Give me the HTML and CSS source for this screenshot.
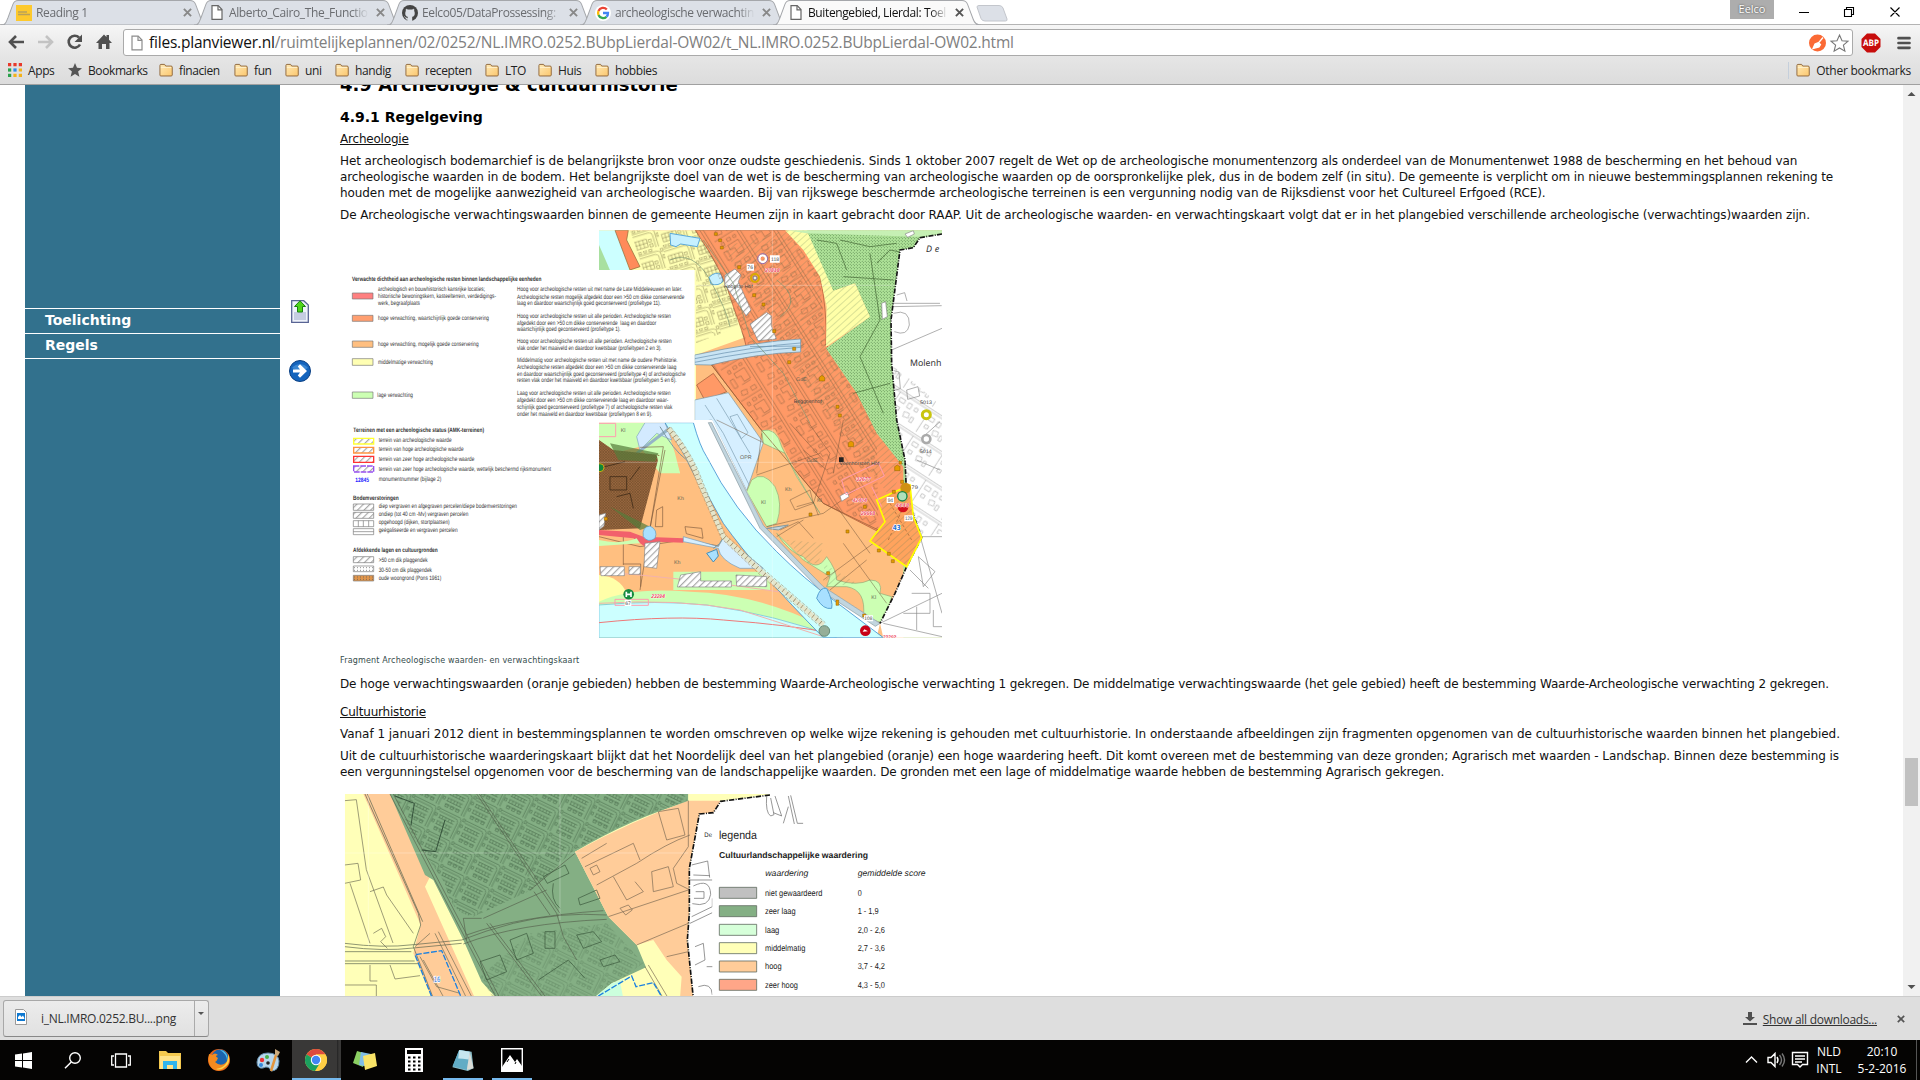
FILE: index.html
```html
<!DOCTYPE html>
<html lang="nl">
<head>
<meta charset="utf-8">
<title>Buitengebied, Lierdal: Toelichting</title>
<link rel="stylesheet" href="styles.css">
</head>
<body>
<svg class="defs" width="0" height="0" aria-hidden="true">
  <defs>
    <linearGradient id="folderFill" x1="0" y1="0" x2="1" y2="1"><stop offset="0" stop-color="#ffe9b5"/><stop offset="1" stop-color="#fbc76e"/></linearGradient>
    <symbol id="folder" viewBox="0 0 15 14"><path d="M1 12.500V2.200Q1 1 2 1h4l1.200 1.800H13q1.200 0 1.200 1.200v8.500Q14 13.400 13 13.400H2q-1 0-1-.9z" fill="url(#folderFill)" stroke="#8c6338"/><path d="M2 4.200h11" stroke="#fff3d2"/></symbol>
    <symbol id="page" viewBox="0 0 12 15"><path d="M1 .7h6.200L11 4.600v9.700H1z" fill="#fff" stroke="#666" stroke-width="1.200"/><path d="M7 .8v4h4" fill="none" stroke="#666" stroke-width="1.200"/></symbol>
    <symbol id="close" viewBox="0 0 8 8"><path d="M.8.8l6.400 6.400M7.200.8L.8 7.200" stroke="currentColor" stroke-width="1.700"/></symbol>
    <symbol id="tab" viewBox="0 0 208 24" preserveAspectRatio="none"><path d="M0 24C5 24 5 21 7 17L12 4Q13.500.5 17 .5H189Q193 .5 194.500 4L200 18Q202 24 208 24z" fill="currentColor" stroke="#a5a7ab"/></symbol>
    <pattern id="hatch" width="14" height="14" patternUnits="userSpaceOnUse" patternTransform="rotate(45)"><path d="M2 0v14" stroke="#555" stroke-width="1.800"/></pattern>
    <pattern id="thinhatch" width="15" height="15" patternUnits="userSpaceOnUse" patternTransform="rotate(48)"><path d="M2 0v15" stroke="#5c7a52" stroke-width="1.300" opacity=".65"/></pattern>
    <pattern id="dots" width="9" height="9" patternUnits="userSpaceOnUse"><circle cx="2" cy="2" r="1.450" fill="#3c6634"/><circle cx="6.500" cy="6.500" r="1.450" fill="#3c6634"/></pattern>
    <pattern id="mesh" width="8" height="8" patternUnits="userSpaceOnUse"><path d="M0 0l8 8M8 0L0 8" stroke="#3a2613" stroke-width="1.100" opacity=".75"/></pattern>
    <pattern id="houses" width="92" height="68" patternUnits="userSpaceOnUse" patternTransform="rotate(-17)"><g fill="none" stroke="#665c35" stroke-width="1.200"><path d="M0 12h70q12 0 12 12v44M0 20h62q12 0 12 12v36M8 36h44v24H8zM8 48h44M18 36v24M29 36v24M41 36v24"/><path d="M4 0h8v7H4zM18 1h8v7h-8zM34 0h8v7h-8zM50 1h9v7h-9zM84 8h7v9h-7zM86 28h6v10h-6zM57 40h9v8h-9zM58 54h9v9h-9z"/></g></pattern>
    <pattern id="houses2" width="112" height="94" patternUnits="userSpaceOnUse" patternTransform="rotate(58)"><g fill="none" stroke="#5d4a32" stroke-width="1.200" opacity=".85"><path d="M0 10h112M0 19h112M30 19v75M60 30h36v22H76v14H60zM8 30h12v16H8zM7 58l14 4-4 18-13-4zM42 30h8v9h-8zM41 48h9v12h-9zM44 72h10v8H44zM72 76h28v12H72zM101 33v30"/></g></pattern>
    <pattern id="houses3" width="84" height="76" patternUnits="userSpaceOnUse" patternTransform="rotate(26)"><g fill="none" stroke="#3b5c3d" stroke-width="1.400"><path d="M0 7h60q12 0 12 13v56M0 15h54q10 0 10 10v51M5 25h50M5 34h50M5 44h50M5 54h50M5 64h50M8 25v9M17 25v9M27 25v9M37 25v9M47 25v9M8 44v10M18 44v10M28 44v10M38 44v10M48 44v10M8 64h9v8H8zM25 64h9v8h-9zM43 64h9v8h-9zM75 5h7v8h-7zM75 24h7v8h-7zM76 45h7v8h-7z"/></g></pattern>
    <pattern id="white" width="104" height="90" patternUnits="userSpaceOnUse" patternTransform="rotate(33)"><g fill="none" stroke="#999" stroke-width="1.500"><path d="M0 8h104M0 15h104M22 15v75M32 28h18v12H32zM62 28h12v16H62zM86 30h10v11H86zM34 56h12v10H34zM64 58l16-3 4 14-17 4zM90 60h9v16h-9z"/></g></pattern>
    <clipPath id="mapClip"><path d="M27 31H1056V1253H27z"/></clipPath>
    <clipPath id="cultClip"><path d="M44 42H1420V132H1147V655H44z"/></clipPath>
  </defs>
</svg>

<header class="chrome">
  <div class="titlebar">
    <div class="tabs">
      <div class="tab"><svg class="tab-shape"><use href="#tab"/></svg><svg class="fav" viewBox="0 0 16 16"><path fill="#fdc92d" d="M0 0h16v16H0z"/><path d="M2 7h9M2 9.500h12" stroke="#b8a15b" stroke-width="1.500"/></svg><span class="tab-title">Reading 1</span><svg class="x"><use href="#close"/></svg></div>
      <div class="tab"><svg class="tab-shape"><use href="#tab"/></svg><svg class="fav doc"><use href="#page"/></svg><span class="tab-title">Alberto_Cairo_The_Functio</span><svg class="x"><use href="#close"/></svg></div>
      <div class="tab"><svg class="tab-shape"><use href="#tab"/></svg><svg class="fav" viewBox="0 0 16 16"><circle cx="8" cy="8" r="8" fill="#444"/><path d="M5.700 16v-3C3 13.400 3 11.500 2 11.300M6 16v-4.300C3.500 11.400 3.300 9 3.500 7.500L4 6V4l2 .8h4L12 4v2l.5 1.500c.2 1.500 0 3.900-2.500 4.200V16z" fill="#dce0e7" stroke="#dce0e7" stroke-width=".4"/></svg><span class="tab-title">Eelco05/DataProssessing:</span><svg class="x"><use href="#close"/></svg></div>
      <div class="tab"><svg class="tab-shape"><use href="#tab"/></svg><svg class="fav" viewBox="0 0 16 16"><circle cx="8" cy="8" r="8" fill="#fff"/><g fill="none" stroke-width="2.300"><path d="M11.800 4.500A5 5 0 0 0 3.500 6" stroke="#ea4335"/><path d="M3.500 6a5 5 0 0 0 0 4" stroke="#fbbc05"/><path d="M3.500 10a5 5 0 0 0 8 1.800" stroke="#34a853"/><path d="M11.500 11.800A5 5 0 0 0 13 8H8" stroke="#4285f4"/></g></svg><span class="tab-title">archeologische verwachtin</span><svg class="x"><use href="#close"/></svg></div>
      <div class="tab active"><svg class="tab-shape"><use href="#tab"/></svg><svg class="fav doc"><use href="#page"/></svg><span class="tab-title">Buitengebied, Lierdal: Toel</span><svg class="x"><use href="#close"/></svg></div>
      <svg class="newtab" viewBox="0 0 32 17"><path d="M1 2Q1 .5 3 .5H23q3 0 4 2.500l4 11q.5 2-1.500 2H9q-3 0-4-2.500z" fill="#dce0e7" stroke="#c3c6cc"/></svg>
    </div>
    <div class="user">Eelco</div>
    <svg class="winbuttons" viewBox="0 0 120 24"><path d="M9 12.500h10M54.500 9.500h7v7h-7zM56.500 9.500v-2h7v7h-2M100.500 7.500l9 9M109.500 7.500l-9 9" fill="none" stroke="#000" stroke-width="1.100"/></svg>
  </div>
  <div class="toolbar">
    <svg class="nav" viewBox="0 0 120 30"><g fill="none" stroke="#505050" stroke-width="2.600"><path d="M25 15H11M17 9l-6 6 6 6"/><path d="M39 15h14M47 9l6 6-6 6" stroke="#c3c3c3"/><path d="M80 10.500a6 6 0 1 0 1 7"/></g><path d="M83 7.500v7.500h-7.500zM97 16l8-8.500 2.500 2.500V8h2.500v4.800l3 3.200h-2.500v6h-3.500v-5h-4v5h-3.500v-6z" fill="#505050"/></svg>
    <div class="omnibox">
      <svg class="urlpage"><use href="#page"/></svg>
      <span class="url"><b>files.planviewer.nl</b>/ruimtelijkeplannen/02/0252/NL.IMRO.0252.BUbpLierdal-OW02/t_NL.IMRO.0252.BUbpLierdal-OW02.html</span>
      <svg class="omni-icons" viewBox="0 0 42 20"><circle cx="9.500" cy="10" r="8.500" fill="#fb6a35"/><path d="M15 4.500l-5 6M10.500 9.500L7 11l-2 4.500 6-1.500 1.500-2.500z" stroke="#fff" fill="#fff" stroke-width="1.300"/><path d="M31.500 2l2.500 5.700 6 .5-4.600 4 1.500 6-5.400-3.200-5.400 3.200 1.500-6-4.600-4 6-.5z" fill="#fff" stroke="#777" stroke-width="1.100"/></svg>
    </div>
    <svg class="abp" viewBox="0 0 20 20"><path d="M6 .5h8L19.500 6v8L14 19.500H6L.5 14V6z" fill="#c70d0c"/><text x="2" y="13.300" textLength="16" lengthAdjust="spacingAndGlyphs" font-size="9" font-weight="bold" fill="#fff">ABP</text></svg>
    <svg class="menu" viewBox="0 0 14 14"><path d="M1.500 2.200h11M1.500 7h11M1.500 11.800h11" stroke="#505050" stroke-width="2.700" stroke-linecap="round"/></svg>
  </div>
  <nav class="bookmarks">
    <div class="bm w60"><svg viewBox="0 0 13 13"><path d="M0 0h3v3H0zM5 0h3v3H5zM10 0h3v3h-3z" fill="#e8392b"/><path d="M0 5h3v3H0z" fill="#2ba14b"/><path d="M5 5h3v3H5z" fill="#2d8bea"/><path d="M10 5h3v3h-3zM5 10h3v3H5zM10 10h3v3h-3z" fill="#f3b21b"/><path d="M0 10h3v3H0z" fill="#2ba14b"/></svg>Apps</div>
    <div class="bm w91"><svg viewBox="0 0 14 14"><path d="M7 0l2 4.800 5 .4-3.900 3.400 1.300 5.100L7 10.900l-4.400 2.800 1.300-5.100L0 5.200l5-.4z" fill="#555"/></svg>Bookmarks</div>
    <div class="bm w75"><svg><use href="#folder"/></svg>finacien</div>
    <div class="bm w51"><svg><use href="#folder"/></svg>fun</div>
    <div class="bm w50"><svg><use href="#folder"/></svg>uni</div>
    <div class="bm w70"><svg><use href="#folder"/></svg>handig</div>
    <div class="bm w80"><svg><use href="#folder"/></svg>recepten</div>
    <div class="bm w53"><svg><use href="#folder"/></svg>LTO</div>
    <div class="bm w57"><svg><use href="#folder"/></svg>Huis</div>
    <div class="bm"><svg><use href="#folder"/></svg>hobbies</div>
    <div class="bm other"><svg><use href="#folder"/></svg>Other bookmarks</div>
  </nav>
</header>

<main class="viewport">
  <aside class="side"><ul class="side-menu"><li>Toelichting</li><li>Regels</li></ul></aside>
  <div class="tools">
    <svg class="up" viewBox="0 0 18 23"><path d="M.7.7h12L17.300 5v17.300H.7z" fill="#eef2fa" stroke="#586494" stroke-width="1.300"/><path d="M3 12h12v8H3z" fill="#c5cde2"/><path d="M9 .8l5.500 5.700h-3V12h-5V6.500h-3z" fill="#4fd41b" stroke="#16820f"/></svg>
    <svg class="next" viewBox="0 0 22 22"><circle cx="11" cy="11" r="10.500" fill="#1464bd" stroke="#0a3f83"/><path d="M3 8a9 7 0 0 1 16 0q-8 5-16 0z" fill="#4a94dc" opacity=".7"/><path d="M4 9.500h7L8.800 6.500 11 4.300 18 11l-7 6.700-2.200-2.200 2.200-3H4z" fill="#fff"/></svg>
  </div>
  <article class="doc-body">
    <h2><span>4.9 Archeologie &amp; cultuurhistorie</span></h2>
    <h3>4.9.1 Regelgeving</h3>
    <p class="sub">Archeologie</p>
    <p><span class="ln a1">Het archeologisch bodemarchief is de belangrijkste bron voor onze oudste geschiedenis. Sinds 1 oktober 2007 regelt de Wet op de archeologische monumentenzorg als onderdeel van de Monumentenwet 1988 de bescherming en het behoud van</span>
    <span class="ln a2">archeologische waarden in de bodem. Het belangrijkste doel van de wet is de bescherming van archeologische waarden op de oorspronkelijke plek, dus in de bodem zelf (in situ). De gemeente is verplicht om in nieuwe bestemmingsplannen rekening te</span>
    <span class="ln a3">houden met de mogelijke aanwezigheid van archeologische waarden. Bij van rijkswege beschermde archeologische terreinen is een vergunning nodig van de Rijksdienst voor het Cultureel Erfgoed (RCE).</span></p>
    <p><span class="ln a4">De Archeologische verwachtingswaarden binnen de gemeente Heumen zijn in kaart gebracht door RAAP. Uit de archeologische waarden- en verwachtingskaart volgt dat er in het plangebied verschillende archeologische (verwachtings)waarden zijn.</span></p>

    <svg class="fig1" viewBox="340 228 603 410">
      <g transform="translate(590 220) scale(.33333)" clip-path="url(#mapClip)">
        <path d="M27 31H1056V1253H27z" fill="#ffbf80"/>
        <!-- northern residential area -->
        <path d="M100 31H340L430 220 470 350 318 405V600H27V31z" fill="#ffffb3"/><path d="M120 31H340L430 220 445 320 318 370V150H160z" fill="url(#houses)"/>
        <path d="M240 40l90 15-8 25-50-8-14 8-16-5zM357 172q20-20 38-8l4 20q-12 15-36 8z" fill="#c6f0ff" stroke="#5aa8d8" stroke-width="3"/>
        <path d="M27 31H80L120 155H27z" fill="#ccffff"/><path d="M27 75L62 155H27z" fill="#a8e0a0"/><path d="M75 31H115L110 60 150 140 120 150z" fill="#ff8b5a" stroke="#863" stroke-width="2"/>
        <!-- village ridge -->
        <path d="M316 31H590Q650 80 690 170 712 270 708 375 760 420 800 520L860 630 945 735 950 800 865 935 700 850 510 625 365 435 470 385Q460 340 430 260 405 160 316 31z" fill="#ff9966" stroke="#a65534" stroke-width="2"/>
        <path d="M316 31H590L690 170 708 375 860 630 865 930 700 850 365 435 470 385 430 260z" fill="url(#houses2)"/>
        <path d="M590 31L690 170 708 375 860 630 945 735 900 830 560 380 400 80z" fill="url(#thinhatch)"/>
        <path d="M585 31H655L730 212 795 190 840 290 708 380 710 260 690 170 640 90z" fill="#ffffa8"/><path d="M585 31H655L730 212 795 190 840 290 708 380 710 260 690 170 640 90z" fill="url(#thinhatch)"/>
        <path d="M650 31H1056V1253H940V740L860 640 800 520 708 385 840 290 795 190 730 212z" fill="#aee298"/><path d="M650 31H1056V640H940V740L860 640 800 520 708 385 840 290 795 190 730 212z" fill="url(#dots)"/><path d="M840 100l30 200-60 110 70 170M750 60l90 20 80-10M760 170l150 10M790 520l110-30M680 60l60 10 30 80M860 130l40-40 50 10" stroke="#406030" stroke-width="2" fill="none"/>
        <path d="M590 31H1056V42L980 50 650 40z" fill="#c6f0b4"/>
        <!-- motorway and water -->
        <path d="M314 405Q500 365 632 357V396Q500 400 363 435L314 434z" fill="#c9e4f4" stroke="#668fa8" stroke-width="2"/><path d="M314 416Q500 378 632 369M314 427Q500 390 632 382M480 380L632 378" stroke="#648caa" fill="none" stroke-width="2"/>
        <path d="M320 495L370 460 410 515 345 542z" fill="#ff9966" stroke="#953" stroke-width="2"/>
        <path d="M314 540L415 518 520 668 470 812 365 600 314 608z" fill="#d6efff" stroke="#7b99a5" stroke-width="2"/><path d="M345 555L400 640 480 800M380 535L480 700M420 590l22-7 32 55-20 18z" fill="none" stroke="#7b9db0" stroke-width="2"/>
        <!-- lower polders -->
        <path d="M27 608H225L255 700 270 760 210 760 150 680 27 710z" fill="#ccffb3"/><path d="M165 608H225L245 660 200 640 150 690 140 650z" fill="#d3eaff" stroke="#7fa5bf" stroke-width="2"/><path d="M240 624L140 700" stroke="#94b4c8" stroke-width="9"/>
        <path d="M515 630L555 628 600 720 690 880 720 970 690 1010 610 970 550 930 590 870 550 760z" fill="#ffbf80"/>
        <path d="M515 632Q560 620 575 680L620 770 690 880Q650 820 585 700L520 670zM485 780Q520 750 555 800 580 850 560 910L530 920 470 815z" fill="#ccffb3" stroke="#91aa77" stroke-width="2"/>
        <path d="M560 940Q600 1000 640 1010 680 1060 710 1010 740 1050 740 1080 800 1100 840 1080 880 1080 870 1120L905 1130 880 1210 820 1190Q830 1110 770 1100L710 1100 720 1070 640 1020z" fill="#ccffb3" stroke="#91aa77" stroke-width="2"/>
        <path d="M590 960l110 10-15 60-35 0zM700 1030l100 60-90 10z" fill="url(#thinhatch)"/>
        <!-- dark excavated estate -->
        <path d="M27 660L70 690 208 705 150 925 27 930z" fill="#9c6a40"/><path d="M27 660L70 690 208 705 150 925 27 930z" fill="url(#mesh)"/><path d="M60 670L205 700 195 725 85 720zM60 860L180 920 150 930z" fill="#567c3a" opacity=".7"/><path d="M200 705L260 730 270 760 210 750z" fill="#ccffb3"/>
        <path d="M60 770h50v40H60zM80 830l40-10 10 45M45 740l60-15M120 780l30-40" fill="none" stroke="#2f2010" stroke-width="2"/>
        <!-- roads and parcels -->
        <path d="M220 680L150 1110M150 682L220 680M225 690L180 925M200 870l18-10 0 60-22 0zM285 920l50 5 4 30-50-14zM100 1032h52V1100M100 950v85M27 950L150 980 280 960 400 980" fill="none" stroke="#735238" stroke-width="1.800"/>
        <path d="M380 600L520 668M515 640L500 760M500 765L690 700M530 920L700 880 770 830M560 950L640 900M760 970L890 1150M740 860L840 1000M600 840l60-30 10 40-55 20zM620 860l50-14 15 40M570 930l55-25 45 50M720 1110l110-90M850 970L700 1080M600 610L700 720M650 600L720 700 670 850M760 600l-30 160M640 690l70 60" stroke="#6e5239" stroke-width="1.800" fill="none" opacity=".8"/>
        <path d="M365 435L510 625 700 850 865 930" stroke="#8a5a35" stroke-width="2" fill="none"/>
        <path d="M27 930L120 935 160 950 280 955V968L200 965 165 980 130 955 27 945z" fill="#f2606c"/><path d="M160 950Q155 920 180 918 205 930 195 955 175 970 160 950z" fill="#a8e0ff" stroke="#5a9bc4" stroke-width="2"/>
        <path d="M27 1065Q90 1070 110 1120L27 1150z" fill="#ffffa8"/><path d="M27 960Q90 975 140 955L150 970 27 978zM250 1055H540V1110H250z" fill="#ccffb3"/>
        <path d="M27 1145Q120 1100 300 1115 500 1120 700 1220V1253H27z" fill="#ccffb3"/>
        <!-- river Maas and canal -->
        <path d="M27 1155Q200 1140 350 1155 560 1185 740 1253H27z" fill="#ccffff" stroke="#69b5d6" stroke-width="2"/><path d="M27 1208Q250 1185 400 1200 600 1215 730 1240" fill="none" stroke="#e77" stroke-width="3"/><path d="M27 1150Q260 1135 450 1170L700 1250M27 1055Q300 1075 600 1120L860 1210" fill="none" stroke="#f2b2ad" stroke-width="3"/>
        <path d="M314 600H367L520 916 600 1010 700 1100 870 1210 860 1253 760 1253 400 900 260 608z" fill="#fff"/>
        <path d="M225 608H310Q330 680 350 710 430 870 560 995 640 1075 730 1140L880 1253H700Q500 1050 400 910 320 760 225 608z" fill="#ccffff" stroke="#3d91d3" stroke-width="2.500"/>
        <path d="M365 608L520 916 700 1100 870 1210 856 1219 690 1110 510 925 355 608z" fill="#c1d5df" stroke="#87989e" stroke-width="2"/><path d="M530 925L595 915 565 930z" fill="#c1d5df" stroke="#87989e" stroke-width="3"/>
        <path d="M280 950L385 980 402 950 520 1045 450 1045Q390 1020 385 985L280 965z" fill="#d6efff" stroke="#6f9cbc" stroke-width="2"/><path d="M350 1000l30-12 5 20-15 18z" fill="#a8e0ff" stroke="#478db5" stroke-width="3"/><path d="M210 620Q250 690 290 720L390 920Q415 960 370 985" fill="none" stroke="#7c99a0" stroke-width="3"/>
        <path d="M235 625Q300 700 330 790L400 950 520 1060 700 1215" stroke="#e4e6cc" stroke-width="14" fill="none"/><path d="M235 625Q300 700 330 790L400 950 520 1060 700 1215" stroke="#8c7858" stroke-width="13" fill="none" stroke-dasharray="1.800 13"/><path d="M228 629Q290 700 322 790L394 955 514 1068 694 1222M242 621Q308 700 338 786L406 944 526 1052 706 1208" stroke="#a98f68" stroke-width="1.800" fill="none" stroke-dasharray="10 4"/>
        <path d="M680 1135Q690 1100 710 1105 730 1145 725 1165 700 1170 680 1135z" fill="#a8e0ff" stroke="#55a1d0" stroke-width="3"/>
        <path d="M27 150H314V608H27z" fill="#fff"/>
        <!-- area beyond the municipal border -->
        <path d="M1056 42L990 53 970 83 930 90 903 300 905 430 920 600 945 720 950 830 995 953 950 1040 915 1120 870 1210 880 1253H1056z" fill="#fff"/><path d="M905 430L920 600 945 720 950 830 995 953 1056 940V560z" fill="url(#white)"/>
        <g fill="none" stroke="#888" stroke-width="2"><path d="M905 250h145M905 260l150-3M920 225l24-7 7 25M910 280q50-15 48 35-6 35-45 20M905 390L1056 325M950 510l34-10 5 28-36 10zM912 452l15 4 4 50-17 5M870 1210L1056 1120M990 948L1056 1180M940 1180h80v-60h-55M960 1050l55 55M985 1010l50 45-35 45zM995 950H1056M880 1210L1056 1250M980 1160V1230M1030 1170v50h26M1000 650l50-45M980 720l70 30"/></g>
        <path d="M1056 42L990 53 970 83 930 90 903 300 905 430 920 600 945 720 950 830 995 953 950 1040 915 1120 870 1210" fill="none" stroke="#151515" stroke-width="5" stroke-dasharray="15 4 3 4"/>
        <!-- monument zone and hatched parcels -->
        <path d="M860 840L960 795 970 890 995 953 950 1040 840 963 885 905z" fill="#ffa35d"/><path d="M860 840L960 795 970 890 995 953 950 1040 840 963 885 905z" fill="url(#thinhatch)" stroke="#ff0" stroke-width="5"/><path d="M900 850l65 110M895 960l50-110" stroke="#9c6238" stroke-width="2" stroke-dasharray="8 7"/>
        <g fill="#fff" stroke="#888" stroke-width="2"><path d="M405 165l30-18 18 18-8 20 38 85-14 18-65-95zM480 312l50-35 14 10 0 30 15 40-55 5z"/><path d="M165 970l45-5-10 80-38-5zM30 1040h73v27H33zM117 1040h34v23h-34zM272 1065l60-10v28h92v18H262zM438 1065l92 5v30l-90-2zM27 885l20-5-5 38-15 12zM750 828l22-12 5 14-22 14zM875 250l12-5 5 45-15 8zM945 42l25-10 3 10-20 10z"/></g>
        <g fill="url(#hatch)"><path d="M405 165l30-18 18 18-8 20 38 85-14 18-65-95zM480 312l50-35 14 10 0 30 15 40-55 5z"/><path d="M165 970l45-5-10 80-38-5zM30 1040h73v27H33zM117 1040h34v23h-34zM272 1065l60-10v28h92v18H262zM438 1065l92 5v30l-90-2zM27 885l20-5-5 38-15 12z"/></g>
        <path d="M547 31V1253M27 196H1056M27 727H1056" stroke="#fff" stroke-width="1.500" opacity=".55"/>
        <path d="M340 60l90 130 50 160 100 110 80 150M240 120q70-30 120 60t60 140M560 180q80 60 10 110" stroke="#75936f" stroke-width="2" fill="none"/>
        <path d="M755 780l110-52 18 40-115 56zM75 1138h100v18H75zM845 800l30 60M27 610h50v40H27" stroke="#ff9db0" stroke-width="3" fill="none"/>
        <g fill="#e59a00" stroke="#8b6200" stroke-width="1.500"><path d="M373 38h9v8h-9zM386 57h9v8h-9zM391 79h9v8h-9zM443 137h9v9h-9zM488 221h9v9h-9zM516 249h9v9h-9zM548 329h9v9h-9zM608 382h9v9h-9zM593 422h9v9h-9zM688 472l8-6 8 6v11h-16zM738 556h9v9h-9zM745 582h9v9h-9zM775 668l8-5 8 5v12h-16zM914 740l8-5 8 5v12h-16zM657 879h9v9h-9zM768 930h9v9h-9zM820 856h9v9h-9zM862 987h9v9h-9zM892 997h9v9h-9zM904 1019h9v9h-9zM710 1055h9v9h-9zM738 1140h8v16h-8zM818 1182h9v9h-9zM907 811h9v9h-9zM932 781h9v9h-9zM927 724h8v8h-8zM43 892h9v9h-9z"/></g>
        <g fill="none"><circle cx="518" cy="116" r="10" stroke="#fff" stroke-width="7"/><circle cx="518" cy="116" r="15" stroke="#8e6eb6" stroke-width="3"/><circle cx="495" cy="174" r="12" stroke="#d9a900" stroke-width="6"/><circle cx="495" cy="174" r="6" fill="#eee" stroke="#777" stroke-width="3"/><circle cx="1009" cy="584" r="12" stroke="#c9c50d" stroke-width="9" fill="#fff"/><circle cx="1009" cy="657" r="12" stroke="#aaa" stroke-width="8" fill="#fff"/></g>
        <circle cx="947" cy="804" r="16" fill="#d09014"/><path d="M923 860a16 17 0 0 0 32 0z" fill="#d4111d"/><circle cx="937" cy="829" r="14" fill="#aee0bd" stroke="#138547" stroke-width="4"/><circle cx="116" cy="1123" r="16" fill="#16893f"/><path d="M109 1115v16M123 1115v16M109 1123h14" stroke="#fff" stroke-width="5"/><circle cx="703" cy="1233" r="16" fill="#95ae98" stroke="#668b75" stroke-width="3"/><circle cx="826" cy="1232" r="16" fill="#c80017"/><path d="M818 1235l5-7 11 6z" fill="#fff"/><circle cx="30" cy="743" r="12" fill="#108639" stroke="#cda914" stroke-width="3"/><path d="M747 712h14v14h-14z" fill="#222"/>
        <g class="map-tags"><path d="M540 106h29v22h-29zM470 131h22v21h-22zM890 831h22v18h-22zM943 886h26v18h-26zM104 1139h20v19h-20zM822 1186h27v18h-27z" fill="#fff"/><text x="543" y="123" textLength="24" lengthAdjust="spacingAndGlyphs">118</text><text x="472" y="147" textLength="17">76</text><text x="893" y="846" textLength="16">94</text><text x="945" y="901" textLength="22" lengthAdjust="spacingAndGlyphs">129</text><text x="106" y="1155" textLength="16">67</text><text x="823" y="1200" textLength="24" lengthAdjust="spacingAndGlyphs">108</text><text x="964" y="806" textLength="20" lengthAdjust="spacingAndGlyphs">79</text><text x="990" y="552" textLength="36" lengthAdjust="spacingAndGlyphs">5013</text><text x="989" y="699" textLength="36" lengthAdjust="spacingAndGlyphs">5014</text><text x="402" y="205" textLength="86" lengthAdjust="spacingAndGlyphs">Hoogste Hof</text><text x="611" y="548" textLength="84" lengthAdjust="spacingAndGlyphs">Beggnenhof</text><text x="748" y="735" textLength="120" lengthAdjust="spacingAndGlyphs">Veenhorsten Hof</text></g>
        <g class="map-code"><text x="92" y="636">Kl</text><text x="262" y="839">Kh</text><text x="252" y="1032">Kh</text><text x="450" y="716">OPR</text><text x="585" y="813">Kh</text><text x="513" y="853">Kl</text><text x="650" y="727">GdE</text><text x="681" y="847">Kl</text><text x="844" y="1138">Kl</text><text x="618" y="482">GdE</text></g>
        <g class="map-red"><text x="526" y="157" textLength="43">20818</text><text x="799" y="784" textLength="43">32677</text><text x="788" y="845" textLength="43">42404</text><text x="813" y="884" textLength="43">29968</text><text x="917" y="862" textLength="40">4448</text><text x="184" y="1133" textLength="41">23294</text><text x="878" y="1258" textLength="41">23292</text></g>
        <text x="908" y="929" font-size="21" font-weight="bold" fill="#1b72d7" stroke="#fff" stroke-width="4" paint-order="stroke" textLength="24" lengthAdjust="spacingAndGlyphs">43</text>
        <text class="place" x="1008" y="96" font-style="italic" textLength="40">D e</text><text class="place" x="960" y="439" textLength="94" lengthAdjust="spacingAndGlyphs">Molenh</text>
      </g>
      <g class="legend" transform="translate(330 220) scale(.33333)">
        <g font-weight="bold"><text x="66" y="183" textLength="568" lengthAdjust="spacingAndGlyphs">Verwachte dichtheid aan archeologische resten binnen landschappelijke eenheden</text><text x="70" y="635" textLength="392" lengthAdjust="spacingAndGlyphs">Terreinen met een archeologische status (AMK-terreinen)</text><text x="69" y="839" textLength="137" lengthAdjust="spacingAndGlyphs">Bodemverstoringen</text><text x="69" y="996" textLength="254" lengthAdjust="spacingAndGlyphs">Afdekkende lagen en cultuurgronden</text></g>
        <g stroke="#777" stroke-width="2"><path fill="#ff8080" d="M67 219h62v18H67z"/><path fill="#ff9f70" d="M67 286h62v18H67z"/><path fill="#ffbf80" d="M67 363h62v19H67z"/><path fill="#ffffb3" d="M67 416h62v20H67z"/><path fill="#ccffb3" d="M67 516h62v19H67z"/></g>
        <text x="144" y="212" textLength="321" lengthAdjust="spacingAndGlyphs">archeologisch en bouwhistorisch kansrijke locaties;</text><text x="144" y="234" textLength="354" lengthAdjust="spacingAndGlyphs">historische bewoningskern, kasteelterrein, verdedigings-</text><text x="144" y="254" textLength="126" lengthAdjust="spacingAndGlyphs">werk, begraafplaats</text>
        <text x="144" y="301" textLength="333" lengthAdjust="spacingAndGlyphs">hoge verwachting, waarschijnlijk goede conservering</text><text x="144" y="377" textLength="302" lengthAdjust="spacingAndGlyphs">hoge verwachting, mogelijk goede conservering</text><text x="144" y="431" textLength="165" lengthAdjust="spacingAndGlyphs">middelmatige verwachting</text><text x="142" y="532" textLength="107" lengthAdjust="spacingAndGlyphs">lage verwachting</text>
        <text x="561" y="214" textLength="496" lengthAdjust="spacingAndGlyphs">Hoog voor archeologische resten uit met name de Late Middeleeuwen en later.</text><text x="561" y="236" textLength="502" lengthAdjust="spacingAndGlyphs">Archeologische resten mogelijk afgedekt door een &gt;50 cm dikke conserverende</text><text x="561" y="255" textLength="432" lengthAdjust="spacingAndGlyphs">laag en daardoor waarschijnlijk goed geconserveerd (profieltype 11).</text>
        <text x="561" y="294" textLength="462" lengthAdjust="spacingAndGlyphs">Hoog voor archeologische resten uit alle perioden. Archeologische resten</text><text x="561" y="315" textLength="418" lengthAdjust="spacingAndGlyphs">afgedekt door een &gt;50 cm dikke conserverende&#160; laag en daardoor</text><text x="561" y="334" textLength="311" lengthAdjust="spacingAndGlyphs">waarschijnlijk goed geconserveerd (profieltype 1).</text>
        <text x="561" y="370" textLength="464" lengthAdjust="spacingAndGlyphs">Hoog voor archeologische resten uit alle perioden. Archeologische resten</text><text x="561" y="391" textLength="434" lengthAdjust="spacingAndGlyphs">vlak onder het maaiveld en daardoor kwetsbaar (profieltypen 2 en 3).</text>
        <text x="561" y="426" textLength="482" lengthAdjust="spacingAndGlyphs">Middelmatig voor archeologische resten uit met name de oudere Prehistorie.</text><text x="561" y="446" textLength="478" lengthAdjust="spacingAndGlyphs">Archeologische resten afgedekt door een &gt;50 cm dikke conserverende laag</text><text x="561" y="467" textLength="506" lengthAdjust="spacingAndGlyphs">en daardoor waarschijnlijk goed geconserveerd (profieltype 4) of archeologische</text><text x="561" y="487" textLength="479" lengthAdjust="spacingAndGlyphs">resten vlak onder het maaiveld en daardoor kwetsbaar (profieltypen 5 en 6).</text>
        <text x="561" y="526" textLength="461" lengthAdjust="spacingAndGlyphs">Laag voor archeologische resten uit alle perioden. Archeologische resten</text><text x="561" y="547" textLength="454" lengthAdjust="spacingAndGlyphs">afgedekt door een &gt;50 cm dikke conserverende laag en daardoor waar-</text><text x="561" y="567" textLength="466" lengthAdjust="spacingAndGlyphs">schijnlijk goed geconserveerd (profieltype 7) of archeologische resten vlak</text><text x="561" y="588" textLength="406" lengthAdjust="spacingAndGlyphs">onder het maaiveld en daardoor kwetsbaar (profieltypen 8 en 9).</text>
        <g fill="url(#hatch)" stroke-width="4"><path stroke="#ff3" d="M71 655h60v17H71z"/><path stroke="#ff9440" d="M71 682h60v17H71z"/><path stroke="#f33" d="M71 709h60v18H71z"/><path stroke="#9750ef" stroke-dasharray="17 3" d="M71 738h60v18H71z"/></g>
        <text x="146" y="665" textLength="219" lengthAdjust="spacingAndGlyphs">terrein van archeologische waarde</text><text x="146" y="693" textLength="255" lengthAdjust="spacingAndGlyphs">terrein van hoge archeologische waarde</text><text x="146" y="723" textLength="287" lengthAdjust="spacingAndGlyphs">terrein van zeer hoge archeologische waarde</text><text x="146" y="753" textLength="517" lengthAdjust="spacingAndGlyphs">terrein van zeer hoge archeologische waarde, wettelijk beschermd rijksmonument</text><text x="146" y="784" textLength="188" lengthAdjust="spacingAndGlyphs">monumentnummer (bijlage 2)</text><text class="mono-no" x="76" y="787" textLength="41" lengthAdjust="spacingAndGlyphs">12845</text>
        <g fill="url(#hatch)" stroke="#777" stroke-width="2"><path d="M70 852h61v19H70zM70 877h61v18H70zM70 1010h61v18H70z"/><path fill="#fff" d="M70 902h61v18H70zM85 902v18M100 902v18M116 902v18M70 926h61v18H70zM70 935h61M70 1038h61v17H70z"/><path fill="#e0954b" d="M70 1066h61v17H70z"/></g><path d="M72 1043h58M72 1051h58M72 1071h58M72 1078h58" stroke="#555" stroke-width="2" stroke-dasharray="3 6"/>
        <text x="146" y="864" textLength="415" lengthAdjust="spacingAndGlyphs">diep vergraven en afgegraven percelen/diepe bodemverstoringen</text><text x="146" y="888" textLength="269" lengthAdjust="spacingAndGlyphs">ondiep (tot 40 cm -Mv) vergraven percelen</text><text x="146" y="912" textLength="213" lengthAdjust="spacingAndGlyphs">opgehoogd (dijken, stortplaatsen)</text><text x="146" y="936" textLength="237" lengthAdjust="spacingAndGlyphs">geëgaliseerde en vergraven percelen</text><text x="146" y="1027" textLength="147" lengthAdjust="spacingAndGlyphs">&gt;50 cm dik plaggendek</text><text x="146" y="1055" textLength="160" lengthAdjust="spacingAndGlyphs">30-50 cm dik plaggendek</text><text x="146" y="1081" textLength="188" lengthAdjust="spacingAndGlyphs">oude woongrond (Pons 1961)</text>
      </g>
    </svg>
    <p class="caption">Fragment Archeologische waarden- en verwachtingskaart</p>
    <p><span class="ln a5">De hoge verwachtingswaarden (oranje gebieden) hebben de bestemming Waarde-Archeologische verwachting 1 gekregen. De middelmatige verwachtingswaarde (het gele gebied) heeft de bestemming Waarde-Archeologische verwachting 2 gekregen.</span></p>
    <p class="sub second">Cultuurhistorie</p>
    <p><span class="ln a6">Vanaf 1 januari 2012 dient in bestemmingsplannen te worden omschreven op welke wijze rekening is gehouden met cultuurhistorie. In onderstaande afbeeldingen zijn fragmenten opgenomen van de cultuurhistorische waarden binnen het plangebied.</span></p>
    <p><span class="ln a7">Uit de cultuurhistorische waarderingskaart blijkt dat het Noordelijk deel van het plangebied (oranje) een hoge waardering heeft. Dit komt overeen met de bestemming van deze gronden; Agrarisch met waarden - Landschap. Binnen deze bestemming is</span>
    <span class="ln a8">een vergunningstelsel opgenomen voor de bescherming van de landschappelijke waarden. De gronden met een lage of middelmatige waarde hebben de bestemming Agrarisch gekregen.</span></p>
    <svg class="fig2" viewBox="340 794 600 206">
      <g transform="translate(330 780) scale(.33333)">
        <g clip-path="url(#cultClip)">
          <path d="M44 42H1110V655H44z" fill="#ffffb8"/>
          <path d="M100 42H185L300 290 285 320 435 655H305L250 520 272 435 200 270z" fill="#ffcc99"/>
          <path d="M180 42H1075V65Q990 90 910 125 820 165 735 215L835 410 920 495 948 562 845 610 790 655H500L455 605 400 480 310 300 285 285z" fill="#84af84"/>
          <path d="M190 42H1070V62L910 120 732 210 605 330 430 410Q360 400 345 310L250 170z" fill="url(#houses3)"/>
          <path d="M450 590L600 460 830 430 940 550 790 655H490z" fill="url(#houses3)" opacity=".55"/>
          <path d="M1075 42H1320V45L1172 64 1075 62z" fill="#ffffb8"/>
          <path d="M735 215Q910 120 1075 62L1172 62 1150 98 1108 102 1090 200 1078 265V400L1072 480 1090 655H1050L1055 590 1010 540 970 480 920 495 835 410z" fill="#ffcc99"/>
          <path d="M845 610L905 588 920 620 1000 655H790z" fill="#ccffdd"/><path d="M870 605L945 565 1000 655H880z" fill="#ffffb8"/>
          <path d="M1172 64L1150 98 1108 102 1090 200 1078 265V400L1072 480 1090 655H1147V132H1420V42H1330z" fill="#fff"/>
          <path d="M395 480Q470 450 550 430 690 395 830 405M400 492Q560 430 830 418M410 465Q560 410 820 392M44 490Q160 505 250 494L395 480M44 500Q160 515 250 504L395 490M44 515h200M44 543h210M44 551h220M180 42L500 655M190 42L510 655M105 42L265 400 272 435 250 500 310 655M112 42L278 425M440 42L680 400 700 470 740 540M448 42L690 400M600 330L735 220M460 415L650 330M455 415H400L410 480M612 335L660 405M470 430L640 655M480 430L650 655" fill="none" stroke="#56604d" stroke-width="2"/>
          <path d="M44 62l35-3 30 210 80 220M60 310l60 180M44 255l40-5 8 50-48 10M120 335l40-14 10 24 80 115M130 460l25-15 12 25-15 15 20 20M120 555v48h22M44 615h95v40M180 555l15 42 75-10M270 530l50 90 70 20M280 540l60 110M315 460l95 195M325 455l100 195M300 460l-45 40" fill="none" stroke="#6c6b55" stroke-width="2"/>
          <path d="M755 235L830 190M765 260l145-70 20 50M800 315L920 250Q1010 190 1080 165M985 95l25 85 55-15-20-80zM850 290l40 70 50-25-25-30M965 275l50-15 15 60-60 15zM835 410L1075 330M920 495L1075 430M1075 62V200L1030 265 1040 310 1080 330M780 265l20-10 10 20-20 10zM870 385l25-10 12 15-20 15zM1010 530L1075 515M945 560L1000 655M955 555L1015 655" fill="none" stroke="#776651" stroke-width="2"/>
          <path d="M540 480l50-20 20 60-50 20zM645 455h30v50h-30zM740 465l50-10 25 30-55 20zM450 545l60-20 20 50-60 25zM810 540l45-15 15 20-50 15zM745 355l55-25 10 25-60 20zM640 290l65-35 12 25-65 30zM625 600l90-60 50 55M670 310q-10 50 20 75" fill="none" stroke="#385439" stroke-width="2"/>
          <path d="M195 48l58 22-10 66M345 120l-28 95-42-5" fill="none" stroke="#34513a" stroke-width="3"/>
          <path d="M305 650L255 524 335 512 392 648M805 648L905 588 918 620 970 608 995 650" fill="none" stroke="#1b80e0" stroke-width="4" stroke-dasharray="18 5"/><text x="311" y="605" font-size="22" fill="#1b72d7" stroke="#fff" stroke-width="5" paint-order="stroke" textLength="20" lengthAdjust="spacingAndGlyphs">16</text>
          <path d="M115 42V500M44 219H1075M690 42V420" stroke="#fff" stroke-width="1.500" opacity=".55"/>
          <path d="M1320 45L1172 64 1150 98 1108 102 1090 200 1078 265V400L1072 480 1090 655" fill="none" stroke="#111" stroke-width="5" stroke-dasharray="16 4 3 4"/>
          <path d="M1310 48q-4 50 12 60l10-4-10-50M1335 48l20 60-25-10M1375 48l18 84M1382 46l20 84h20M1360 130l15-50M1085 255l48-12 6 50M1090 285l50 2M1080 300h67M1090 318q50-25 52 25-5 40-55 28M1097 335h25v20h-30M1085 410l62-30v-25M1080 430l67-32M1095 500l25-10 5 50-30 15M1130 560h20M1105 620q40-15 42 25" stroke="#777" stroke-width="2.300" fill="none"/>
        </g>
        <text class="cultuur de" x="1123" y="171" textLength="23" lengthAdjust="spacingAndGlyphs">De</text>
        <g class="cultuur"><text class="big" x="1167" y="177" textLength="114" lengthAdjust="spacingAndGlyphs">legenda</text><text x="1167" y="235" font-weight="bold" textLength="447" lengthAdjust="spacingAndGlyphs">Cultuurlandschappelijke waardering</text><g font-style="italic"><text x="1306" y="289" textLength="129" lengthAdjust="spacingAndGlyphs">waardering</text><text x="1583" y="289" textLength="204" lengthAdjust="spacingAndGlyphs">gemiddelde score</text></g>
        <g><text x="1305" y="347" textLength="172" lengthAdjust="spacingAndGlyphs">niet gewaardeerd</text><text x="1583" y="347" textLength="12" lengthAdjust="spacingAndGlyphs">0</text><text x="1305" y="402" textLength="92" lengthAdjust="spacingAndGlyphs">zeer laag</text><text x="1583" y="402" textLength="63" lengthAdjust="spacingAndGlyphs">1 - 1,9</text><text x="1305" y="458" textLength="43" lengthAdjust="spacingAndGlyphs">laag</text><text x="1583" y="458" textLength="82" lengthAdjust="spacingAndGlyphs">2,0 - 2,6</text><text x="1305" y="514" textLength="121" lengthAdjust="spacingAndGlyphs">middelmatig</text><text x="1583" y="514" textLength="82" lengthAdjust="spacingAndGlyphs">2,7 - 3,6</text><text x="1305" y="568" textLength="50" lengthAdjust="spacingAndGlyphs">hoog</text><text x="1583" y="568" textLength="82" lengthAdjust="spacingAndGlyphs">3,7 - 4,2</text><text x="1305" y="623" textLength="99" lengthAdjust="spacingAndGlyphs">zeer hoog</text><text x="1583" y="623" textLength="82" lengthAdjust="spacingAndGlyphs">4,3 - 5,0</text></g></g>
        <g stroke="#657065" stroke-width="2.500"><path fill="#c0c0c0" d="M1168 322h112v33h-112z"/><path fill="#84af84" d="M1168 377h112v33h-112z"/><path fill="#d6ffd9" d="M1168 433h112v33h-112z"/><path fill="#ffffb8" d="M1168 488h112v33h-112z"/><path fill="#ffcc99" d="M1168 543h112v33h-112z"/><path fill="#ffa688" d="M1168 598h112v33h-112z"/></g>
      </g>
    </svg>
  </article>
  <div class="scroll"><svg viewBox="0 0 17 17"><path d="M4.500 11L8.500 7l4 4z" fill="#505050"/></svg><div class="thumb"></div><svg viewBox="0 0 17 17"><path d="M4.500 6L8.500 10l4-4z" fill="#505050"/></svg></div>
</main>

<section class="downloads">
  <div class="dl-item">
    <svg class="dl-file" viewBox="0 0 12 16"><path d="M.5.5h8l3 3v12H.5z" fill="#fff" stroke="#999"/><path d="M2 4h8v8H2z" fill="#0e78d0"/><path d="M3 10V8l2-2 1.500 2L8 6.500 9.300 9v1z" fill="#fff"/></svg>
    <span>i_NL.IMRO.0252.BU....png</span><i class="dl-more"></i>
  </div>
  <div class="dl-right"><svg viewBox="0 0 14 14"><path d="M5 0h4v5h3L7 9.500 2 5h3z" fill="#505050"/><path d="M0 12h14" stroke="#505050" stroke-width="2"/></svg><u>Show all downloads...</u><svg class="x dl-x"><use href="#close"/></svg></div>
</section>

<footer class="taskbar">
  <div class="cell"><svg viewBox="0 0 17 17"><path d="M0 2.500l7-1V8H0zM8 1.400L17 0v8H8zM0 9h7v6.500l-7-1zM8 9h9v8l-9-1.400z" fill="#fff"/></svg></div>
  <div class="cell"><svg viewBox="0 0 17 17"><circle cx="11" cy="6" r="5.300" fill="none" stroke="#fff" stroke-width="1.400"/><path d="M7.300 10L1 16.300" stroke="#fff" stroke-width="1.500"/></svg></div>
  <div class="cell"><svg class="w20" viewBox="0 0 20 17"><path d="M4.500 2h11v13h-11zM3 4H.7v9H3M17 4h2.300v9H17" fill="none" stroke="#fff" stroke-width="1.300"/></svg></div>
  <div class="cell"><svg class="w22" viewBox="0 0 22 20"><path d="M0 1h7l2 2h13v16H0z" fill="#f4c94f"/><path d="M1 6h20v13H1z" fill="#ffe389"/><path d="M4 19v-8h14v8h-4v-4H8v4z" fill="#2fb5ee"/></svg></div>
  <div class="cell"><svg class="w22" viewBox="0 0 22 22"><circle cx="11" cy="11" r="11" fill="#e76519"/><circle cx="12" cy="9" r="8.500" fill="#1b64ae"/><path d="M12 1a8 8 0 0 1 7 11q0-7-7-11z" fill="#52bce7"/><path d="M1 5l3 1q3-3 6 0-4 1 0 3-1 3-3 4 4 4 9 2 5-3 4-10 3 8-2 13-6 6-13 2Q-1 15 1 5z" fill="#f58b1f"/><path d="M20 5q3 8-2 12-5 5-10 3Q21 18 20 5z" fill="#fcd54c"/></svg></div>
  <div class="cell"><svg class="w24" viewBox="0 0 24 24"><path d="M1 14Q2 5 12 5t11 8q0 10-8 10-2-6-8-3-6 1-6-6z" fill="#b8d7ec" stroke="#638caa"/><circle cx="6" cy="12" r="2.200" fill="#e33"/><circle cx="11" cy="9" r="2" fill="#4ab14a"/><circle cx="5" cy="17" r="2" fill="#3488db"/><circle cx="12" cy="15" r="1.800" fill="#222"/><path d="M21 4L15 23" stroke="#e2953d" stroke-width="2.500"/><path d="M19 7l0-6 5 3-2 4z" fill="#c9aa7d"/></svg></div>
  <div class="cell chrome-cell open"><svg class="w22" viewBox="0 0 22 22"><circle cx="11" cy="11" r="11" fill="#ffce44"/><path d="M11 11L1.500 5.500A11 11 0 0 1 20.500 5.500H11z" fill="#dd4b3e"/><path d="M11 11L1.500 5.500A11 11 0 0 0 10 22l5-8z" fill="#1ba05f"/><path d="M11 11V5.500h9.500A11 11 0 0 1 10.500 22l5-8z" fill="#ffce44"/><circle cx="11" cy="11" r="5.200" fill="#fff"/><circle cx="11" cy="11" r="4.200" fill="#4285f4"/></svg></div>
  <div class="cell"><svg class="w24" viewBox="0 0 24 22"><path d="M4 2l10 3-4 13-10-4z" fill="#8bcf62"/><path d="M8 3l10 2-2 13-10-2z" fill="#80bde7"/><path d="M10 7l12-3 2 13-12 4z" fill="#f9e367"/></svg></div>
  <div class="cell"><svg class="calc" viewBox="0 0 18 24"><path d="M0 0h18v24H0z" fill="#fff"/><path d="M2 2h14v4H2z" fill="#000"/><path d="M3 9.500h13M3 13.500h13M3 17.500h13M3 21.500h13" stroke="#000" stroke-width="2" stroke-dasharray="2.500 2.500"/></svg></div>
  <div class="cell open"><svg class="w22" viewBox="0 0 22 23"><path d="M7 1l13 2 2 17-6 3L0 19z" fill="#8abbc7"/><path d="M7 1l11 2-3 19L0 18z" fill="#61acc5"/><path d="M7 1l11 2-1 8q-7-1-11-1z" fill="#c7e6ef"/><path d="M18 3l4 17-7 2z" fill="#d9dcd7"/></svg></div>
  <div class="cell open"><svg class="photo" viewBox="0 0 22 24"><path d="M.7.700h20.600v22.600H.7z" stroke="#fff" stroke-width="1.400"/><path d="M1 19l8-12 5 7 2-3 5 7v5H1z" fill="#fff"/><path d="M8 11l-2 3M15 14l-1 2" stroke="#000"/></svg></div>
  <div class="tray"><svg viewBox="0 0 66 20"><g fill="none" stroke="#fff" stroke-width="1.400"><path d="M1 12.500l5.500-5.500 5.500 5.500M23 7.500h3l4-4v13l-4-4h-3zM32 7q2 3 0 6"/><path d="M34.500 5q4 5 0 10M37 3.500q5 6.500 0 13" stroke="#777"/><path d="M47.500 2.500h15v12h-5L55 17l-2.500-2.500h-5zM50 6h10M50 9h10M50 12h7"/></g></svg><div class="tray-text">NLD<br>INTL</div><div class="tray-text clock">20:10<br>5-2-2016</div><i class="peek"></i></div>
</footer>
</body>
</html>
```

FILE: styles.css
```css
* { box-sizing: border-box; }
body { margin: 0; width: 1920px; height: 1080px; overflow: hidden; display: flex; flex-direction: column; background: #fff; font-family: "Open Sans", "Noto Sans", sans-serif; }
svg { display: block; flex: none; }
svg text { text-rendering: geometricPrecision; }
.defs { position: absolute; }

/* browser chrome */
.chrome { height: 85px; flex: none; background: linear-gradient(#fff 24px, #f6f6f6 25px, #e6e6e6 55px, #dcdcdc 84px); border-bottom: 1px solid #a0a0a0; }
.titlebar { height: 25px; display: flex; background: #fff; border-bottom: 1px solid #b4b4b4; }
.tabs { display: flex; width: 1714px; padding-left: 1px; }
.tab { position: relative; width: 208px; height: 25px; margin-right: -15px; padding: 0 16px 0 15px; display: flex; align-items: center; color: #dce0e7; flex: none; }
.tab.active { color: #fafafa; z-index: 2; }
.tab-shape { position: absolute; left: 0; top: 0; width: 208px; height: 25px; }
.fav, .tab-title, .tab .x { position: relative; }
.fav { width: 16px; height: 16px; }
.fav.doc { width: 12px; height: 15px; margin: 0 2px; }
.tab-title { width: 144px; margin: 0 3px 0 4px; white-space: nowrap; overflow: hidden; font-size: 12px; letter-spacing: -.38px; line-height: 20px; color: #6a6c70; -webkit-mask-image: linear-gradient(90deg, #000 85%, transparent 97%); mask-image: linear-gradient(90deg, #000 85%, transparent 97%); }
.active .tab-title { color: #111; }
.x { width: 9px; height: 9px; color: #888; }
.active .x { color: #555; }
.newtab { width: 32px; height: 17px; margin: 5px 0 0 10px; }
.user { width: 44px; height: 19px; margin-left: 16px; background: #adadad; color: #fff; font-size: 11px; line-height: 18px; text-align: center; text-shadow: 0 0 2px #333; }
.winbuttons { width: 120px; height: 24px; margin-left: 16px; }
.toolbar { height: 32px; display: flex; align-items: center; padding: 3px 9px 0 0; }
.nav { width: 120px; height: 30px; margin: -2px 4px 0 -1px; }
.omnibox { width: 1730px; height: 27px; display: flex; align-items: center; border: 1px solid #aaa; border-radius: 3px; background: #fff; padding: 0 2px 0 7px; }
.urlpage { width: 12px; height: 16px; opacity: .75; }
.url { flex: 1; margin: -2px 0 0 6px; font-size: 15.5px; letter-spacing: -.21px; line-height: 24px; color: #808080; white-space: nowrap; }
.url b { font-weight: normal; color: #111; }
.omni-icons { width: 42px; height: 20px; }
.abp { width: 20px; height: 20px; margin-left: 8px; }
.menu { width: 14px; height: 14px; margin-left: 16px; }
.bookmarks { height: 26px; display: flex; padding: 0 9px 0 8px; align-items: center; font-size: 12px; letter-spacing: -.4px; color: #222; }
.bm { display: flex; align-items: center; gap: 6px; white-space: nowrap; }
.bm svg { width: 14px; height: 14px; }
.w60 { width: 60px; } .w91 { width: 91px; } .w75 { width: 75px; } .w51 { width: 51px; } .w50 { width: 50px; } .w70 { width: 70px; } .w80 { width: 80px; } .w53 { width: 53px; } .w57 { width: 57px; }
.other { margin-left: auto; padding-left: 7px; border-left: 1px solid #c5cfdb; letter-spacing: -.25px; }

/* page */
.viewport { height: 911px; flex: none; display: flex; overflow: hidden; font-family: "DejaVu Sans", Verdana, sans-serif; padding-left: 25px; }
.side { width: 255px; background: #32718d; padding-top: 223px; }
.side-menu { list-style: none; margin: 0; padding: 0; border-top: 1px solid #fff; }
.side-menu li { height: 25px; border-bottom: 1px solid #fff; padding-left: 20px; color: #fff; font-size: 14px; line-height: 22px; font-weight: bold; }
.tools { width: 60px; padding: 215px 0 0 9px; }
.up { width: 18px; height: 23px; margin-left: 2px; }
.next { width: 22px; height: 22px; margin-top: 37px; }
.doc-body { width: 1563px; color: #111; font-size: 12px; }
.doc-body p, .doc-body h2, .doc-body h3 { margin: 0; white-space: nowrap; line-height: 16px; }
.doc-body p { margin-bottom: 6px; }
.doc-body h2 { height: 8px; margin-bottom: 15px; font-size: 18px; line-height: 16px; display: flex; align-items: flex-end; color: #000; }
.doc-body h2 span { line-height: 16px; }
.doc-body h3 { font-size: 14px; line-height: 18px; margin-bottom: 5px; color: #000; }
.doc-body .sub { text-decoration: underline; letter-spacing: -.2px; }
.ln { display: block; }
.a1 { letter-spacing: -.094px; }
.a2 { letter-spacing: -.105px; }
.a3 { letter-spacing: -.083px; }
.a4 { letter-spacing: -.097px; }
.a5 { letter-spacing: -.118px; }
.a6 { letter-spacing: -.039px; }
.a7 { letter-spacing: -.068px; }
.a8 { letter-spacing: -.133px; }
.fig1 { width: 603px; height: 410px; margin: -1px 0 15px; }
.doc-body .caption { font-size: 8px; letter-spacing: .16px; color: #354c4c; margin-bottom: 7px; }
.doc-body .second { margin-top: 12px; }
.fig2 { width: 600px; height: 206px; margin-top: 14px; }
.scroll { width: 17px; background: #f1f1f1; display: flex; flex-direction: column; align-items: center; }
.scroll svg { width: 17px; height: 17px; }
.thumb { width: 13px; height: 48px; margin: 656px 0 173px; background: #c1c1c1; flex: none; }

/* figure lettering */
.legend { font: 19px "Liberation Sans", Arial, sans-serif; fill: #333; }
.mono-no { fill: #22f; font-weight: bold; }
.map-tags { font: 15px "Liberation Sans", Arial, sans-serif; fill: #444; }
.map-code { font: 16px "Liberation Sans", Arial, sans-serif; fill: #665; }
.map-red { font: italic bold 16px "Liberation Sans", Arial, sans-serif; fill: #ed3e55; stroke: #fff; stroke-width: 2px; paint-order: stroke; }
.place { font-family: "Noto Sans", sans-serif; font-size: 27px; fill: #333; }
.cultuur { font-family: "Liberation Sans", Arial, sans-serif; font-size: 26px; fill: #222; }
.cultuur .big { font-size: 35px; }
.cultuur.de { font-size: 20px; }
.abp { font-family: "Open Sans", sans-serif; }

/* downloads */
.downloads { height: 44px; flex: none; background: #dedede; border-top: 1px solid #ccc; display: flex; justify-content: space-between; padding: 3px 15px 0 3px; font-size: 12px; letter-spacing: -.28px; }
.dl-item { width: 206px; height: 37px; border: 1px solid #a8a8a8; border-bottom-color: #888; border-radius: 3px; background: linear-gradient(#ececec, #e1e1e1); display: flex; align-items: center; color: #333; }
.dl-file { width: 12px; height: 16px; margin: -3px 14px 0 11px; }
.dl-item span { flex: 1; font-size: 12px; }
.dl-more { width: 14px; height: 35px; border-left: 1px solid #aaa; display: flex; padding: 11px 3px; }
.dl-more::before { content: ""; height: 0; border: 3px solid transparent; border-top-color: #555; border-bottom: 0; }
.dl-right { display: flex; align-items: center; height: 38px; color: #333; }
.dl-right > svg:first-child { width: 14px; height: 14px; margin-right: 6px; }
.dl-x { margin-left: 20px; width: 8px; height: 8px; color: #555; }

/* taskbar */
.taskbar { height: 40px; flex: none; background: #050403; display: flex; color: #fff; }
.cell { width: 48.9px; height: 40px; display: flex; align-items: center; justify-content: center; flex: none; }
.cell:first-child { width: 47.6px; }
.cell svg { width: 17px; height: 17px; }
.cell .w20 { width: 20px; } .cell .w22 { width: 22px; height: 22px; } .cell .w24 { width: 24px; height: 24px; }
.cell .calc { width: 18px; height: 24px; } .cell .photo { width: 22px; height: 24px; }
.open { background: linear-gradient(#76b9ed, #76b9ed) center bottom / 40px 2px no-repeat; }
.chrome-cell { background: linear-gradient(#76b9ed, #76b9ed) center bottom / 49px 2px no-repeat, linear-gradient(90deg, #393837 45px, #222 45px, #393837 47px); }
.tray { margin-left: auto; display: flex; align-items: center; font-size: 12px; line-height: 17px; text-align: center; }
.tray > svg { width: 66px; height: 20px; margin-right: 4px; }
.tray-text { width: 28px; margin-right: 14px; white-space: nowrap; }
.clock { width: 50px; margin-right: 9px; }
.peek { width: 4px; height: 40px; border-left: 1px solid #555; }
```
